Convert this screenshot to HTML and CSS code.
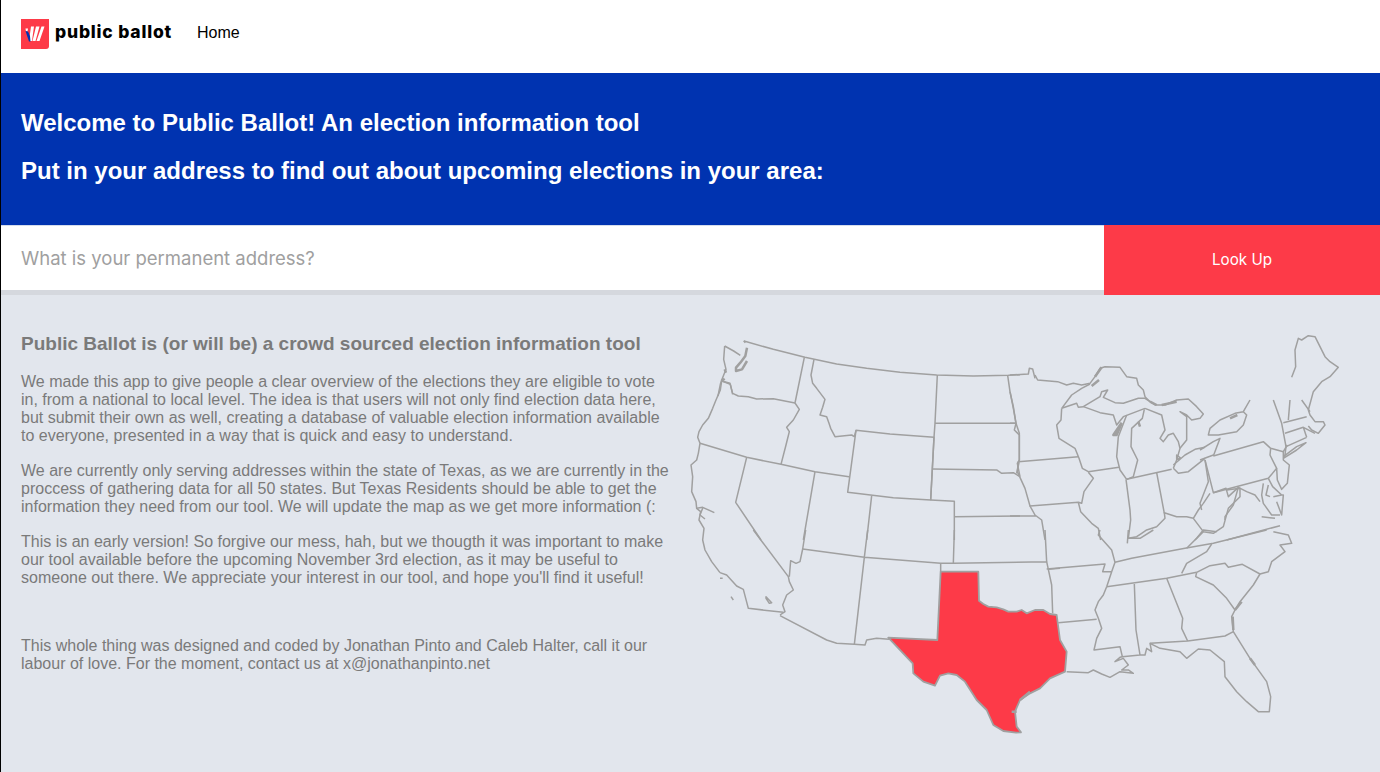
FILE: index.html
```html
<!DOCTYPE html>
<html lang="en">
<head>
<meta charset="utf-8">
<title>Public Ballot</title>
<link rel="stylesheet" href="styles.css">
</head>
<body>
<nav class="nav">
  <a class="brand" href="#">
    <svg class="logo" viewBox="0 0 28 30" width="28" height="30">
      <path class="logo-bg" d="M0 0H28V27Q28 30 25 30H0Z"/>
      <path class="logo-white" d="M10 7.500H13L11 22H8ZM15 7.500H18.500L14.500 22H11.500ZM20.500 7.500H23.500L18.500 22H15.500Z"/>
      <path class="logo-white" d="M4.500 9.500H7L6.500 12.500H5Z"/>
      <path class="logo-blue" d="M4.500 12L7 12.500L9 17L9.500 22.500H8Z"/>
    </svg>
    <span class="brand-name">public ballot</span>
  </a>
  <a class="nav-link" href="#">Home</a>
</nav>
<header class="hero">
  <h1>Welcome to Public Ballot! An election information tool</h1>
  <h1>Put in your address to find out about upcoming elections in your area:</h1>
</header>
<form class="search">
  <input class="search-input" type="text" placeholder="What is your permanent address?">
  <button class="search-button" type="button">Look Up</button>
</form>
<main class="content">
  <section class="about">
    <h2>Public Ballot is (or will be) a crowd sourced election information tool</h2>
    <p>We made this app to give people a clear overview of the elections they are eligible to vote in, from a national to local level. The idea is that users will not only find election data here, but submit their own as well, creating a database of valuable election information available to everyone, presented in a way that is quick and easy to understand.</p>
    <p>We are currently only serving addresses within the state of Texas, as we are currently in the proccess of gathering data for all 50 states. But Texas Residents should be able to get the information they need from our tool. We will update the map as we get more information (:</p>
    <p>This is an early version! So forgive our mess, hah, but we thougth it was important to make our tool available before the upcoming November 3rd election, as it may be useful to someone out there. We appreciate your interest in our tool, and hope you'll find it useful!</p>
    <p class="credit">This whole thing was designed and coded by Jonathan Pinto and Caleb Halter, call it our labour of love. For the moment, contact us at x@jonathanpinto.net</p>
  </section>
  <svg class="map" viewBox="680 320 680 430" width="680" height="430">
    <g transform="translate(680 320) scale(.33333)">
      <path d="M192 63L280 88L375 112L470 132L560 145L660 157L770 165L880 168L985 166L1020 164"/>
      <path d="M125 183L150 190L158 220L175 228L205 230L230 237L280 236L345 249"/>
      <path d="M373 112L345 249L358 268L340 300L320 322L328 335L318 375L303 433"/>
      <path d="M402 118L393 165L398 190L410 205L435 238L428 262L420 285L440 290L447 310L452 325L465 350L515 345L523 350L528 331"/>
      <path d="M528 331L630 342L762 352L752 540L640 533L503 517Z"/>
      <path d="M772 165L765 310L762 352L757 447L752 540"/>
      <path d="M765 310L1008 310M757 447L950 450L965 460L1000 458L1020 470"/>
      <path d="M983 166L990 215L1000 260L1008 310L1003 330L1018 345L1018 420L1012 430L1018 460L1020 470"/>
      <path d="M60 370L200 412L303 433L405 455L507 470"/>
      <path d="M200 412L167 547L243 660M405 455L370 660M575 527L560 660"/>
      <path d="M752 540L823 544L823 660M823 590L1020 588"/>
      <path d="M125 183L121 210L108 240L98 265L85 295L68 315L57 335L53 352L60 370L55 400L50 420L33 435L38 470L35 515L48 545L50 565L62 575L57 600L72 625L68 660L75 690L95 725L120 758"/>
      <path d="M50 565L68 562L103 578M68 565L60 585L75 597"/>
    </g>
    <g transform="translate(712 336) scale(.33333)">
      <path d="M38 30L35 70L42 100L30 130L25 145L18 180M38 30L65 45L85 58M95 14L100 20M30 135L55 145L62 175"/>
      <path class="thick" d="M105 35L100 60L85 80L72 95L72 105L90 100L105 75"/>
      <path class="thick" d="M38 100L42 110M28 135L38 128"/>
    </g>
    <g transform="translate(720 530) scale(.33333)">
      <path class="texas" d="M662 125L775 125L777 212L790 222L805 230L830 232L850 238L865 245L890 245L905 240L920 250L945 240L970 240L990 252L1010 255L1020 330L1040 365L1035 425L990 445L960 475L930 490L900 510L885 545L890 590L903 607L888 608L850 603L820 585L800 540L770 510L735 455L710 435L685 430L660 437L645 467L610 455L580 430L578 400L505 323L652 330Z"/>
      <path class="thick" d="M900 510L930 485M875 545L890 545"/>
      <path d="M248 57L433 82L662 100L700 100L980 95M443 0L433 82L403 343M662 100L662 125M703 0L700 100M975 0L980 95L985 118L995 165L998 250M985 118L1020 115"/>
      <path d="M257 0L248 57L240 95L228 100L212 92L208 140M100 0L205 140L208 155L220 180L200 195L188 225L195 245L180 255"/>
      <path d="M0 128L20 135L50 168L70 178L85 235L190 247M180 257L320 330L350 340L403 343L435 345L440 330L470 325L507 328"/>
      <path d="M0 145H8M33 200L40 210M138 200L155 218L148 220L138 205Z"/>
    </g>
    <g transform="translate(1010 320) scale(.33333)">
      <path d="M0 165L55 162L58 145L68 147L75 175"/>
      <path d="M25 425L205 410M0 215L10 265L18 310L28 340L28 423L20 460M0 310L18 310"/>
      <path d="M25 425L22 455L45 505L60 558L205 547L215 550L222 515L250 475L235 457M205 547L212 575L245 610L265 625L272 660"/>
      <path d="M60 558L75 585L95 600L105 660M0 588L78 587"/>
      <path d="M348 478L360 570L362 600L355 655M440 458L463 580"/>
      <path d="M355 655L380 650L395 640L410 630L440 620L465 595L463 578L500 590L530 590L550 595L565 570L580 550L600 520M550 595L580 635L610 640L640 620L655 565L690 530L690 505L650 510"/>
      <path d="M845 172L857 140L855 90L865 55L875 60L895 47L915 50L945 110L960 125L985 142L960 170L935 185L910 215L895 270L900 285L915 305L940 305L945 315L925 340L905 330L895 318"/>
      <path d="M650 660L810 617M555 660L580 635"/>
    </g>
    <g transform="translate(1055 360) scale(.33333)">
      <path d="M-60 45L-52 60L8 65L35 75L55 70L80 75L105 70L120 50L135 25L150 20L195 22L215 50L245 55L250 75L265 90L270 110L285 125"/>
      <path d="M20 145L50 105L80 85L105 72M20 145L65 130L70 142L85 140L135 158L175 165L185 195L205 170L270 145"/>
      <path d="M85 140L110 125L135 110L140 95L158 90L145 112L180 128L205 130L250 115L270 115L285 125L300 135L330 135L365 120L400 117L425 140L445 162L435 175L410 180L395 165L375 155L395 170L395 240L375 265L365 300L355 325"/>
      <path d="M270 145L320 165L330 210L315 235L325 245L340 225L355 220L370 245L375 265"/>
      <path d="M215 165L190 230L185 290L195 330L215 358M268 148L262 175L230 205L228 260L248 300L235 350L215 358"/>
      <path d="M20 145L18 180L5 195L12 235L60 265L72 295L82 325L100 335L192 322M215 358L350 328"/>
      <path d="M355 325L370 340L400 335L450 295M355 315L390 285L420 268L450 262M365 285L378 295L365 298Z"/>
      <path class="thick" d="M110 78L132 60M120 50L140 22M200 188L175 225L185 225L200 190M285 125L305 135M320 135L365 125M250 185L255 200"/>
    </g>
    <g transform="translate(1200 400) scale(.33333)">
      <path d="M150 0L130 35L105 40L60 60L30 85L25 105L55 105L110 95L130 75L140 45L130 35M0 150L40 125L60 115L40 168M0 180L40 165"/>
      <path class="thick" d="M90 55L112 45"/>
      <path d="M40 168L190 125L212 145L250 155L262 135M15 180L40 278L205 235L230 205L210 165L212 145"/>
      <path d="M250 155L250 180L268 195L262 250L245 268L232 240L230 205"/>
      <path d="M205 235L218 260L245 285L250 285L245 345L230 305M245 285L220 290"/>
      <path d="M190 250L185 285L190 310L215 345L240 345M205 255L198 285L210 290M185 350L225 355"/>
      <path d="M40 278L78 265L85 290L115 262L140 275L165 285L180 305M115 262L100 315L75 350L75 360M15 180L25 245L0 310L5 330"/>
      <path d="M220 0L245 70L258 140L255 165M250 68L320 50M270 0L265 60M305 0L330 35"/>
      <path d="M255 100L310 82L345 100M310 82L320 112M258 140L320 112"/>
      <path d="M250 170L290 140L318 128L290 150L250 175"/>
    </g>
    <g transform="translate(1040 530) scale(.33333)">
      <path d="M225 97L275 85L435 55L520 40L680 0M200 170L380 145L470 127"/>
      <path d="M470 127L510 107L555 100L565 112L607 103L660 132L685 125L695 95L735 65L720 45L755 40L745 15L700 5M425 130L440 100L500 65L515 42"/>
      <path d="M470 127L467 140L520 165L560 205L585 240L600 215L640 165L660 132"/>
      <path d="M380 145L428 265L425 295L443 333L555 318L580 305L575 260L585 240M330 340L443 333"/>
      <path d="M580 305L630 385L680 455L692 500L688 545L655 545L620 515L590 485L555 440L553 395L510 360L475 357L440 385L420 365L360 355L330 340L335 365L320 355L315 375L300 375"/>
      <path d="M283 162L288 300L300 375M200 170L190 195L175 215L165 240L175 265L185 295L170 325L162 360L240 350L247 380L300 375"/>
      <path d="M20 117L195 102L188 125L215 125L225 97L215 60L175 15L180 0M215 125L200 170M55 278L170 268"/>
      <path d="M80 425L145 428L160 420L185 432L210 442L240 425L280 430L265 420L245 420L265 405L250 385L225 395L240 382L247 380"/>
      <path d="M262 40L265 0M265 25L300 25L340 0M440 55L470 25L490 0L530 5"/>
      <path class="thick" d="M630 385L645 405M585 240L605 215M580 300L578 260"/>
    </g>
  </svg>
</main>
</body>
</html>
```
FILE: styles.css
```css
* { box-sizing: border-box; }
html, body { margin: 0; height: 100%; }
body {
  border-left: 1px solid #000;
  font-family: "Liberation Sans", Arial, sans-serif;
  background: #e2e6ed;
  overflow: hidden;
}
.nav {
  height: 73px;
  background: #fff;
  display: flex;
  align-items: flex-start;
  padding: 19px 20px 0;
}
.brand {
  display: flex;
  align-items: center;
  gap: 6px;
  color: #000;
  text-decoration: none;
  margin-right: 25px;
}
.logo { display: block; }
.logo-bg { fill: #fd3a48; }
.logo-white { fill: #fff; }
.logo-blue { fill: #0033b0; }
.brand-name {
  font-family: Inter, sans-serif;
  font-weight: 800;
  font-size: 17.500px;
  line-height: 24px;
  letter-spacing: .8px;
  margin-bottom: 5px;
}
.nav-link {
  color: #000;
  text-decoration: none;
  font-size: 16px;
  line-height: 18px;
  margin-top: 5px;
}
.hero {
  height: 153px;
  background: #0033b0;
  padding: 36px 20px 0;
  border-bottom: 1px solid #d4dcec;
}
.hero h1 {
  margin: 0 0 21px;
  color: #fff;
  font-size: 24px;
  line-height: 27px;
  font-weight: 700;
}
.search {
  display: flex;
  height: 70px;
  margin-top: -1px;
}
.search-input {
  flex: 1;
  min-width: 0;
  border: 0;
  border-bottom: 5px solid #d5d8de;
  border-top: 1px solid #d4dcec;
  background: #fff;
  padding: 0 20px;
  font-family: Inter, sans-serif;
  font-size: 18.500px;
  outline: none;
}
.search-input::placeholder { color: #a0a0a0; opacity: 1; }
.search-button {
  width: 276px;
  border: 0;
  background: #fd3a48;
  color: #fff;
  font-family: Inter, sans-serif;
  font-size: 15.200px;
  padding-bottom: 2px;
}
.content {
  display: flex;
  padding: 25px 0 0 20px;
  color: #7a7a7a;
}
.about { width: 650px; flex: none; margin-right: 8px; padding-top: 13px; }
.about h2 {
  margin: 0 0 18px;
  font-size: 19px;
  line-height: 22px;
  font-weight: 700;
}
.about p {
  margin: 0 0 17px;
  font-size: 16px;
  line-height: 18px;
}
.about .credit { margin-top: 50px; }
.map { display: block; flex: none; margin-left: 1px; overflow: visible; }
.map path {
  fill: none;
  stroke: #a0a0a0;
  stroke-width: 1.500px;
  stroke-linejoin: round;
  vector-effect: non-scaling-stroke;
}
.map .thick { stroke-width: 2.500px; }
.map .texas { fill: #fd3a48; stroke-width: 1.800px; }
```
